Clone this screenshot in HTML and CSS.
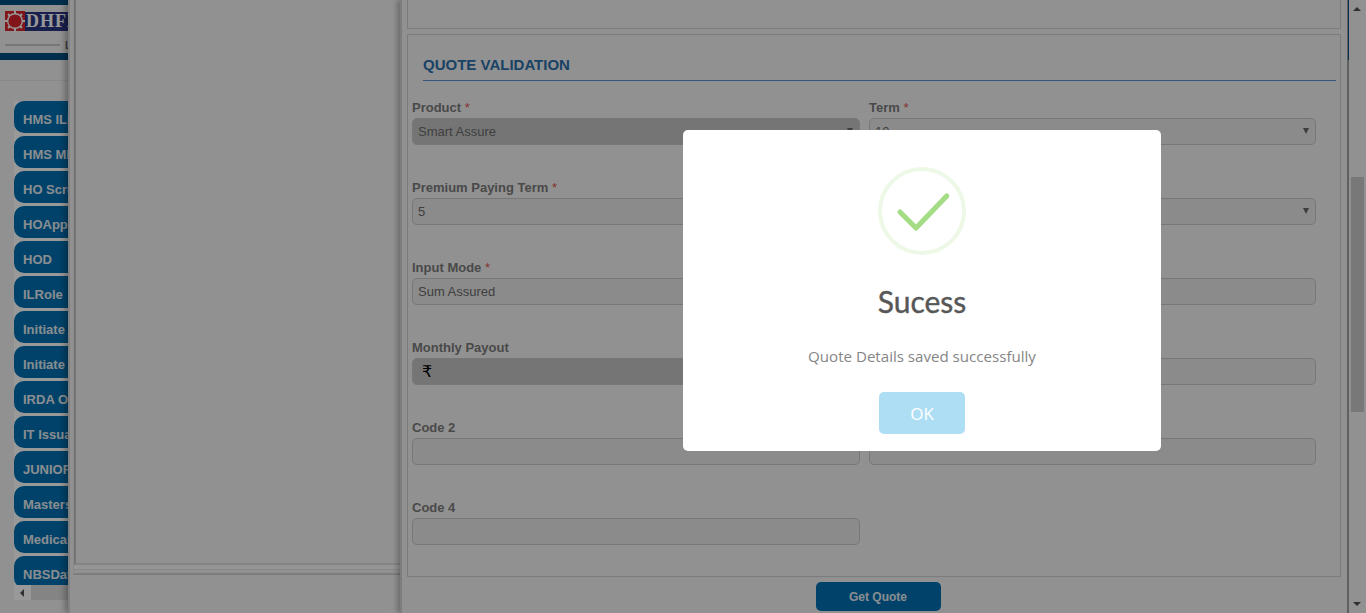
FILE: index.html
```html
<!DOCTYPE html>
<html lang="en">
<head>
<meta charset="utf-8">
<title>Quote Validation</title>
<link rel="stylesheet" href="styles.css">
</head>
<body>
<div class="page">
  <header class="masthead">
    <div class="logo-row">
      <svg class="emblem" width="20" height="20" viewBox="0 0 20 20" aria-hidden="true">
        <rect width="20" height="20" fill="#d8242c"/>
        <circle cx="10" cy="10" r="8" fill="#fff"/>
        <path d="M10 0v4M10 16v4M0 10h4M16 10h4M3 3l3 3M14 14l3 3M17 3l-3 3M6 14l-3 3" stroke="#fff" stroke-width="2"/>
        <circle cx="10" cy="10" r="6.6" fill="#d8242c"/>
      </svg>
      <span class="brand">DHFL</span>
    </div>
    <div class="tag-row"><span class="tag-line"></span><span class="tag-text">L</span></div>
  </header>
  <div class="crumb"></div>
  <nav class="side">
    <div class="side-list">
      <a class="side-btn">HMS ILRole</a>
      <a class="side-btn">HMS MIS Role</a>
      <a class="side-btn">HO Scrutiny</a>
      <a class="side-btn">HOApprover</a>
      <a class="side-btn">HOD</a>
      <a class="side-btn">ILRole</a>
      <a class="side-btn">Initiate Case</a>
      <a class="side-btn">Initiate Claim</a>
      <a class="side-btn">IRDA Officer</a>
      <a class="side-btn">IT Issuance</a>
      <a class="side-btn">JUNIOR</a>
      <a class="side-btn">Masters</a>
      <a class="side-btn">Medical</a>
      <a class="side-btn">NBSData</a>
    </div>
    <div class="side-scroll"><span class="arrow-left"></span><span class="side-thumb"></span></div>
  </nav>
</div>

<div class="windows">
  <section class="win-left">
    <div class="frame-outer"><div class="frame-inner"></div></div>
  </section>
  <section class="win-form">
    <div class="box box-top"></div>
    <div class="box box-main">
      <h2 class="section-title">QUOTE VALIDATION</h2>
      <div class="form-grid">
        <div class="field">
          <label class="lbl">Product <span class="req">*</span></label>
          <div class="ctl ctl-off ctl-select">Smart Assure</div>
        </div>
        <div class="field">
          <label class="lbl">Term <span class="req">*</span></label>
          <div class="ctl ctl-select">10</div>
        </div>
        <div class="field">
          <label class="lbl">Premium Paying Term <span class="req">*</span></label>
          <div class="ctl">5</div>
        </div>
        <div class="field field-nolabel">
          <div class="ctl ctl-select"></div>
        </div>
        <div class="field">
          <label class="lbl">Input Mode <span class="req">*</span></label>
          <div class="ctl">Sum Assured</div>
        </div>
        <div class="field field-nolabel">
          <div class="ctl"></div>
        </div>
        <div class="field">
          <label class="lbl">Monthly Payout</label>
          <div class="ctl ctl-off ctl-money">₹</div>
        </div>
        <div class="field field-nolabel">
          <div class="ctl"></div>
        </div>
        <div class="field">
          <label class="lbl">Code 2</label>
          <div class="ctl"></div>
        </div>
        <div class="field field-nolabel">
          <div class="ctl"></div>
        </div>
        <div class="field">
          <label class="lbl">Code 4</label>
          <div class="ctl"></div>
        </div>
      </div>
    </div>
    <div class="form-foot"><button class="btn-quote" type="button">Get Quote</button></div>
  </section>
  <aside class="vscroll">
    <span class="arrow-up"></span>
    <span class="v-thumb"></span>
    <span class="arrow-down"></span>
  </aside>
</div>

<div class="overlay"></div>

<div class="alert">
  <div class="alert-icon">
    <svg width="88" height="88" viewBox="0 0 88 88" aria-hidden="true">
      <circle cx="44" cy="44" r="42" fill="none" stroke="#edf8e7" stroke-width="4"/>
      <path d="M22 45 L38 61 L68.7 29" fill="none" stroke="#a5dc86" stroke-width="5.2" stroke-linecap="round" stroke-linejoin="round"/>
    </svg>
  </div>
  <h1 class="alert-title">Sucess</h1>
  <p class="alert-text">Quote Details saved successfully</p>
  <button class="alert-ok" type="button">OK</button>
</div>
</body>
</html>
```
FILE: styles.css
```css
* { box-sizing: border-box; }
html, body { margin: 0; height: 100%; overflow: hidden; background: #f2f2f2; }
body { font-family: "Liberation Sans", Arial, sans-serif; }

/* base page underneath the dialogs */
.page { height: 613px; display: flex; flex-direction: column; }
.masthead {
  height: 60px;
  border-top: 5px solid #004f80;
  border-bottom: 7px solid #004f80;
  padding: 6px 0 0 5px;
  overflow: hidden;
}
.logo-row { display: flex; align-items: center; height: 20px; width: 90px; }
.emblem { flex: none; }
.brand {
  flex: 1;
  height: 19px;
  background: #2a3580;
  color: #fff;
  font: bold 18px/19px "Liberation Serif", serif;
  letter-spacing: 1px;
  padding-left: 1px;
  overflow: hidden;
}
.tag-row { display: flex; align-items: center; margin-top: 8px; height: 12px; }
.tag-line { width: 55px; height: 2px; background: #c6c6c6; margin-right: 5px; }
.tag-text { font-size: 10px; font-weight: bold; color: #666; }
.crumb { height: 21px; border-bottom: 1px solid #e4e4e4; }
.side { padding: 20px 0 0 14px; width: 100px; }
.side-list { height: 484px; overflow: hidden; display: flex; flex-direction: column; gap: 3px; background: #fff; }
.side-btn {
  flex: none;
  display: block;
  height: 32px;
  width: 120px;
  padding-left: 9px;
  background: #006fb0;
  border-radius: 10px;
  color: #e4ecf2;
  font-size: 13px;
  font-weight: bold;
  line-height: 37px;
  white-space: nowrap;
  overflow: hidden;
}
.side-scroll { height: 15px; background: #fff; display: flex; align-items: center; }
.arrow-left {
  width: 0; height: 0; margin: 0 7px 0 6px;
  border-top: 4px solid transparent; border-bottom: 4px solid transparent;
  border-right: 4px solid #505050;
}
.side-thumb { width: 60px; height: 15px; background: #dcdcdc; }

/* stacked dialog windows */
.windows { position: absolute; left: 68px; top: 0; right: 0; bottom: 0; display: flex; }
.win-left {
  width: 332px;
  background: #f2f2f2;
  padding: 0 0 38px 3px;
  box-shadow: -3px 0 6px rgba(0,0,0,.3);
  border-left: 2px solid #d6d6d6;
}
.frame-outer {
  height: 100%;
  border-bottom: 2px solid #d0d0d0;
  padding-bottom: 8px;
  border-left: 1px solid #e6e6e6;
}
.frame-inner {
  height: 100%;
  border-left: 2px solid #c4c4c4;
  border-bottom: 2px solid #dcdcdc;
  box-shadow: 0 4px 0 #f8f8f8, 0 5px 0 #e2e2e2;
}
.win-form {
  width: 949px;
  background: #f2f2f2;
  padding: 0 6px 0 5px;
  border-left: 2px solid #d0d0d0;
  border-right: 2px solid #a0a0a0;
  box-shadow: -3px 0 5px rgba(0,0,0,.25);
  position: relative;
}
.win-form::after {
  content: "";
  position: absolute;
  right: -2px;
  top: 0;
  width: 1px;
  height: 60px;
  background: #004f80;
}
.box { border: 1px solid #cfcfcf; }
.box-top { height: 29px; border-top: 0; margin-bottom: 5px; }
.box-main { height: 543px; padding: 20px 4px 0 4px; }
.section-title {
  margin: 0 0 17px 11px;
  padding-bottom: 7px;
  border-bottom: 1px solid #5b92cf;
  color: #2b6ea8;
  font-size: 15px;
  line-height: 19px;
  font-weight: bold;
  height: 26px;
}
.form-grid {
  display: grid;
  grid-template-columns: 448px 447px;
  column-gap: 9px;
  row-gap: 33px;
}
.field { display: flex; flex-direction: column; }
.field-nolabel { padding-top: 20px; }
.lbl { height: 20px; font-size: 13px; line-height: 20px; font-weight: bold; color: #7a7a7a; }
.req { color: #d9534f; font-weight: normal; }
.ctl {
  position: relative;
  height: 27px;
  padding-left: 5px;
  border: 1px solid #c6c6c6;
  border-radius: 5px;
  background: #e8e8e8;
  color: #6a6a6a;
  font-size: 13px;
  line-height: 25px;
}
.ctl-off { background: #c4c4c4; }
.ctl-select::after {
  content: "";
  position: absolute;
  right: 6px;
  top: 9px;
  border-left: 3px solid transparent;
  border-right: 3px solid transparent;
  border-top: 6px solid #666;
}
.ctl-money { font-family: "DejaVu Sans", sans-serif; font-size: 16px; color: #000; padding-left: 9px; }
.form-foot { display: flex; justify-content: center; padding: 5px 0 0 8px; }
.btn-quote {
  width: 125px;
  height: 29px;
  border: 0;
  border-radius: 5px;
  background: #006fb0;
  color: #e4ecf2;
  font: bold 12px "Liberation Sans", Arial, sans-serif;
}
.vscroll { width: 17px; background: #f2f2f2; flex: none; position: relative; }
.v-thumb { position: absolute; left: 2px; right: 2px; top: 177px; height: 235px; background: #c8c8c8; }
.arrow-up, .arrow-down {
  position: absolute; left: 4px; width: 0; height: 0;
  border-left: 4px solid transparent; border-right: 4px solid transparent;
}
.arrow-up { top: 7px; border-bottom: 4px solid #505050; }
.arrow-down { bottom: 7px; border-top: 4px solid #505050; }

/* modal */
.overlay { position: fixed; inset: 0; background: rgba(0,0,0,.4); }
.alert {
  position: fixed;
  left: 683px;
  top: 130px;
  width: 478px;
  height: 321px;
  background: #fff;
  border-radius: 5px;
  display: flex;
  flex-direction: column;
  align-items: center;
  padding-top: 37px;
  font-family: "Open Sans", sans-serif;
}
.alert-icon { width: 88px; height: 88px; }
.alert-icon svg { display: block; }
.alert-title {
  margin: 26px 0 0;
  font-family: Lato, sans-serif;
  font-size: 30px;
  line-height: 40px;
  font-weight: 400;
  -webkit-text-stroke: .4px #575757;
  color: #575757;
}
.alert-text { margin: 25px 0 0; font-size: 15.1px; line-height: 20px; color: #858585; }
.alert-ok {
  margin-top: 26px;
  width: 86px;
  height: 42px;
  border: 0;
  border-radius: 5px;
  background: #aedef4;
  color: #fff;
  font: 17px "Open Sans", sans-serif;
}
```
